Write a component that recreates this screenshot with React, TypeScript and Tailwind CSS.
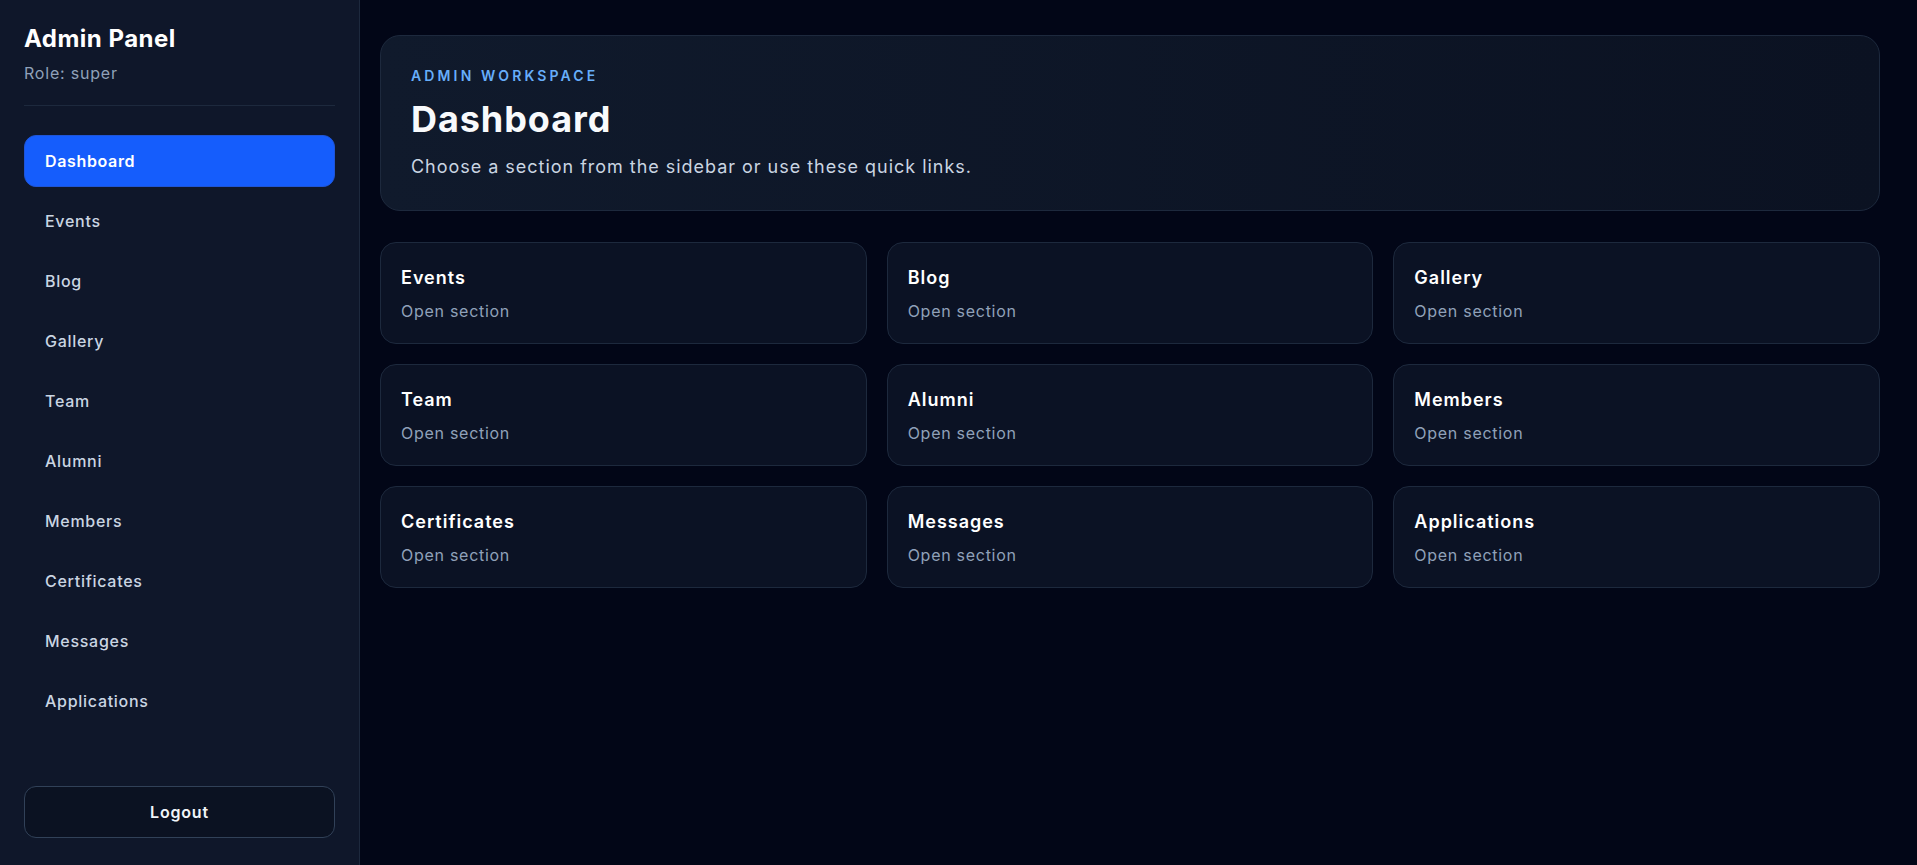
const navItems = [
  "Dashboard",
  "Events",
  "Blog",
  "Gallery",
  "Team",
  "Alumni",
  "Members",
  "Certificates",
  "Messages",
  "Applications",
];

const sections = navItems.slice(1);

const App = () => {
  return (
    <div
      className="flex h-screen w-full overflow-hidden bg-[#020617] text-white"
      style={{ fontFamily: "Inter, 'Noto Sans', sans-serif" }}
    >
      <aside className="flex h-full w-[360px] shrink-0 flex-col border-r border-slate-800 bg-[#0f172a] px-6 pt-[23px] pb-[27px]">
        <div className="border-b border-slate-800 pb-5">
          <h1 className="text-2xl leading-8 font-bold tracking-[0.02em] text-white">Admin Panel</h1>
          <p className="mt-[6px] text-base tracking-[0.05em] text-slate-400">Role: super</p>
        </div>

        <nav className="mt-[29px] flex flex-col gap-2">
          {navItems.map((item) => (
            <a
              key={item}
              href="#"
              className={
                item === "Dashboard"
                  ? "rounded-xl border border-[#1f55d6] bg-[#155dfc] px-5 py-[13px] text-base font-semibold tracking-[0.04em] text-white"
                  : "rounded-xl border border-transparent px-5 py-[13px] text-base font-medium tracking-[0.045em] text-slate-300"
              }
            >
              {item}
            </a>
          ))}
        </nav>

        <button className="mt-auto h-[52px] w-full rounded-xl border border-slate-700 bg-[#0b1222] text-base font-semibold tracking-[0.05em] text-slate-100">
          Logout
        </button>
      </aside>

      <main className="flex-1 pt-[35px] pr-[37px] pl-5">
        <section className="rounded-[20px] border border-slate-800 bg-linear-to-r from-[#101a2c] to-[#0b1222] px-[30px] pt-[30px] pb-[29px]">
          <p className="text-sm font-semibold tracking-[0.224em] text-[#67aefa] uppercase">
            Admin Workspace
          </p>
          <h2 className="mt-[13px] text-4xl leading-10 font-bold tracking-[0.026em] text-slate-50">
            Dashboard
          </h2>
          <p className="mt-[14px] text-lg tracking-[0.054em] text-slate-300">
            Choose a section from the sidebar or use these quick links.
          </p>
        </section>

        <div className="mt-[31px] grid grid-cols-3 gap-5">
          {sections.map((s) => (
            <a
              key={s}
              href="#"
              className="rounded-2xl border border-slate-800 bg-[#0b1224] px-5 pt-[21px] pb-5"
            >
              <h3 className="text-lg font-semibold tracking-[0.055em] text-white">{s}</h3>
              <p className="mt-[7px] text-base tracking-[0.045em] text-slate-400">Open section</p>
            </a>
          ))}
        </div>
      </main>
    </div>
  );
};

export default App;
